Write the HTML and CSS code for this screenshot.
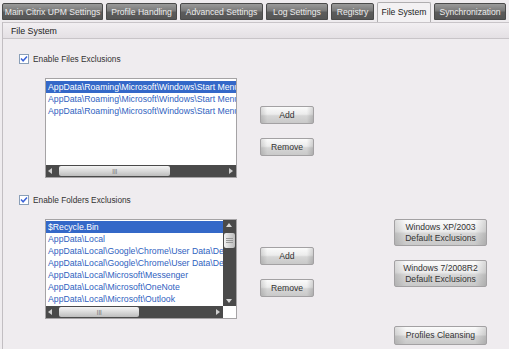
FILE: index.html
```html
<!DOCTYPE html>
<html>
<head>
<meta charset="utf-8">
<link rel="stylesheet" href="styles.css">
</head>
<body>
<div class="tabs">
  <div class="tab t-main">Main Citrix UPM Settings</div>
  <div class="tab t-profile">Profile Handling</div>
  <div class="tab t-adv">Advanced Settings</div>
  <div class="tab t-log">Log Settings</div>
  <div class="tab t-reg">Registry</div>
  <div class="tab t-fs active">File System</div>
  <div class="tab t-sync">Synchronization</div>
</div>
<div class="panel">
  <div class="panel-head">File System</div>
  <div class="content">
    <label class="check-row">
      <span class="cb"><svg width="10" height="10" viewBox="0 0 10 10"><path d="M2 4.6 L4.1 6.8 L8 2.4" fill="none" stroke="#3a62d8" stroke-width="1.5"/></svg></span>
      Enable Files Exclusions
    </label>
    <div class="row row1">
      <div class="list list1">
        <div class="items">
          <div class="item sel">AppData\Roaming\Microsoft\Windows\Start Menu</div>
          <div class="item">AppData\Roaming\Microsoft\Windows\Start Menu</div>
          <div class="item">AppData\Roaming\Microsoft\Windows\Start Menu</div>
        </div>
        <div class="hscroll">
          <span class="arr arr-l"></span>
          <span class="thumb h1"><span class="grip">III</span></span>
          <span class="fill"></span>
          <span class="arr arr-r"></span>
        </div>
      </div>
      <div class="btncol">
        <div class="btn small">Add</div>
        <div class="btn small">Remove</div>
      </div>
    </div>

    <label class="check-row check2">
      <span class="cb"><svg width="10" height="10" viewBox="0 0 10 10"><path d="M2 4.6 L4.1 6.8 L8 2.4" fill="none" stroke="#3a62d8" stroke-width="1.5"/></svg></span>
      Enable Folders Exclusions
    </label>
    <div class="row row2">
      <div class="list list2">
        <div class="top">
          <div class="items">
            <div class="item sel">$Recycle.Bin</div>
            <div class="item">AppData\Local</div>
            <div class="item">AppData\Local\Google\Chrome\User Data\Default</div>
            <div class="item">AppData\Local\Google\Chrome\User Data\Default</div>
            <div class="item">AppData\Local\Microsoft\Messenger</div>
            <div class="item">AppData\Local\Microsoft\OneNote</div>
            <div class="item">AppData\Local\Microsoft\Outlook</div>
          </div>
          <div class="vscroll">
            <span class="arr arr-u"></span>
            <span class="vthumb"><span class="vgrip"></span></span>
            <span class="fill"></span>
            <span class="arr arr-d"></span>
          </div>
        </div>
        <div class="bottom">
          <div class="hscroll">
            <span class="arr arr-l"></span>
            <span class="thumb h2"><span class="grip">III</span></span>
            <span class="fill"></span>
            <span class="arr arr-r"></span>
          </div>
          <div class="corner"></div>
        </div>
      </div>
      <div class="btncol">
        <div class="btn small">Add</div>
        <div class="btn small">Remove</div>
      </div>
      <div class="rightcol">
        <div class="btn big">Windows XP/2003<br>Default Exclusions</div>
        <div class="btn big">Windows 7/2008R2<br>Default Exclusions</div>
        <div class="btn wide">Profiles Cleansing</div>
      </div>
    </div>
  </div>
</div>
</body>
</html>
```
FILE: styles.css
```css
* { box-sizing: border-box; }
html, body { margin: 0; padding: 0; }
body {
  width: 509px;
  height: 349px;
  overflow: hidden;
  background: #efecef;
  font-family: "Liberation Sans", Arial, sans-serif;
  font-size: 8.4px;
  color: #333;
}
.tabs {
  display: flex;
  gap: 3px;
  padding: 3px 0 0 2px;
  height: 22px;
  align-items: flex-start;
}
.tab {
  height: 17px;
  line-height: 16px;
  text-align: center;
  background: linear-gradient(#9a9a9a 0%, #7a7a7a 45%, #5c5c5c 55%, #555 100%);
  border: 1px solid #4a4a4a;
  border-radius: 2px 2px 0 0;
  color: #ececec;
  white-space: nowrap;
  font-size: 8.6px;
}
.t-main { width: 101px; }
.t-profile { width: 71px; }
.t-adv { width: 83px; }
.t-log { width: 62px; }
.t-reg { width: 43px; }
.t-fs { width: 54px; }
.t-sync { width: 72px; }
.tab.active {
  margin-top: -1px;
  height: 20px;
  line-height: 19px;
  background: #f3f1f3;
  border-color: #b0aeb0;
  border-bottom: none;
  color: #222;
}
.panel {
  margin-left: 2px;
  border-left: 1px solid #c2bec2;
  height: 327px;
}
.panel-head {
  height: 17px;
  line-height: 16px;
  padding-left: 8px;
  background: linear-gradient(#f2eff2, #e4e0e4);
  border-top: 1px solid #c8c4c8;
  border-bottom: 1px solid #c8c4c8;
  color: #222;
  font-size: 8.8px;
}
.content {
  padding-left: 16px;
}
.check-row {
  display: flex;
  align-items: center;
  gap: 4px;
  margin-top: 15px;
  height: 10px;
  color: #333;
  font-size: 8.3px;
}
.check2 { margin-top: 17px; }
.cb {
  width: 10px;
  height: 10px;
  border: 1px solid #8a9fb8;
  background: #fff;
  display: flex;
  align-items: center;
  justify-content: center;
}
.cb svg { display: block; margin: -1px; }
.row {
  display: flex;
  align-items: flex-start;
  margin-top: 14px;
}
.list {
  margin-left: 26px;
  width: 192px;
  height: 100px;
  border: 1px solid #a5a3a5;
  background: #fff;
  display: flex;
  flex-direction: column;
  overflow: hidden;
}
.items {
  flex: 1;
  overflow: hidden;
  padding-top: 2px;
}
.list2 .items { padding-top: 1px; }
.item {
  height: 12px;
  line-height: 12px;
  padding-left: 2px;
  white-space: nowrap;
  overflow: hidden;
  color: #2f62c0;
  font-size: 8.7px;
}
.item.sel {
  background: #3468c8;
  color: #fff;
}
.hscroll {
  height: 12px;
  flex: none;
  display: flex;
  align-items: stretch;
  background: #4a4a4a;
}
.hscroll .fill, .vscroll .fill { flex: 1; }
.arr {
  flex: none;
  width: 12px;
  height: 12px;
  position: relative;
}
.arr::after {
  content: "";
  position: absolute;
  width: 0; height: 0;
  border: 3px solid transparent;
}
.arr-l::after { left: 2px; top: 3px; border-right: 4px solid #cfcfcf; border-left: none; }
.arr-r::after { right: 3px; top: 3px; border-left: 4px solid #cfcfcf; border-right: none; }
.arr-u::after { left: 3px; top: 3px; border-bottom: 4px solid #d8d8d8; border-top: none; }
.arr-d::after { left: 3px; bottom: 3px; border-top: 4px solid #d8d8d8; border-bottom: none; }
.thumb {
  margin: 1px 0;
  background: linear-gradient(#f4f4f4, #d4d4d4 60%, #bdbdbd);
  border-radius: 2px;
  display: flex;
  align-items: center;
  justify-content: center;
  color: #888;
  font-size: 8px;
  letter-spacing: -0.5px;
}
.thumb.h1 { width: 111px; margin-left: 1px; }
.thumb.h2 { width: 80px; margin-left: 1px; }
.top {
  flex: 1;
  display: flex;
  overflow: hidden;
}
.vscroll {
  width: 13px;
  flex: none;
  background: #4a4a4a;
  display: flex;
  flex-direction: column;
  align-items: center;
}
.vscroll .arr { width: 13px; height: 13px; }
.vthumb {
  width: 11px;
  height: 15px;
  background: linear-gradient(90deg, #f2f2f2, #d0d0d0 60%, #bcbcbc);
  border-radius: 2px;
  display: flex;
  align-items: center;
  justify-content: center;
}
.vgrip {
  width: 7px;
  height: 5px;
  border-top: 1px solid #999;
  border-bottom: 1px solid #999;
  position: relative;
}
.vgrip::after {
  content: "";
  position: absolute;
  left: 0; right: 0; top: 1px;
  border-top: 1px solid #999;
}
.bottom {
  display: flex;
  height: 12px;
  flex: none;
}
.bottom .hscroll { flex: 1; }
.corner { width: 13px; background: #fff; }
.btncol {
  margin-left: 23px;
  padding-top: 28px;
  display: flex;
  flex-direction: column;
  gap: 14px;
}
.btn {
  border: 1px solid #a3a1a3;
  border-radius: 2px;
  background:
    linear-gradient(90deg, rgba(0,0,0,0.12), rgba(0,0,0,0) 12%, rgba(0,0,0,0) 88%, rgba(0,0,0,0.14)),
    linear-gradient(#fbfbfb, #ececec 45%, #d6d6d6 55%, #c9c9c9);
  color: #333;
  text-align: center;
  white-space: nowrap;
  font-size: 8.6px;
}
.btn.small {
  width: 54px;
  height: 18px;
  line-height: 16px;
}
.rightcol {
  margin-left: 80px;
  display: flex;
  flex-direction: column;
  gap: 14px;
}
.btn.big {
  width: 93px;
  height: 27px;
  line-height: 11px;
  padding-top: 2px;
}
.btn.wide {
  width: 93px;
  height: 19px;
  line-height: 17px;
  margin-top: 25px;
}
```
